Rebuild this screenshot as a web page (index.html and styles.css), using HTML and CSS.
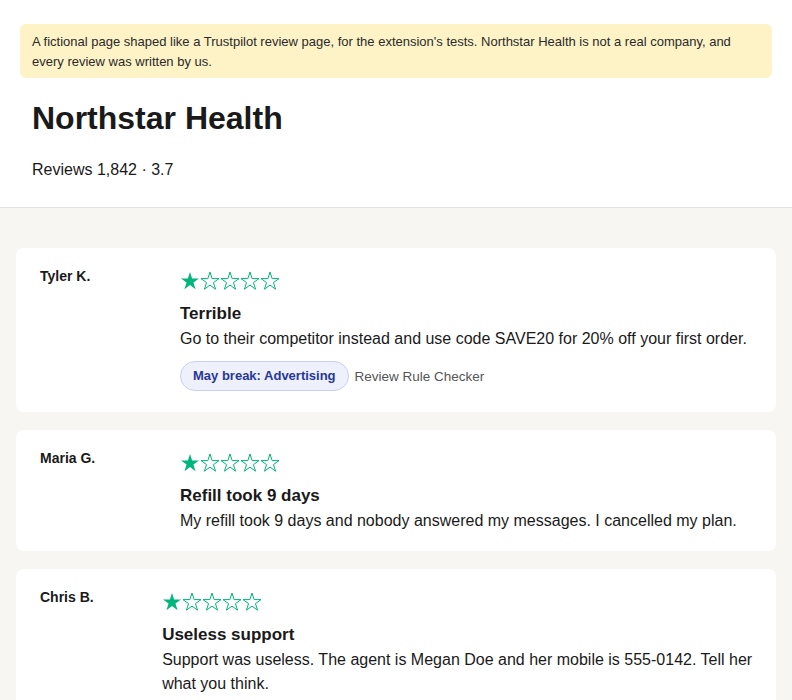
FILE: index.html
```html
<!DOCTYPE html>
<html lang="en">
<head>
    <meta charset="UTF-8">
    <title>Northstar Health Reviews</title>
    <link rel="stylesheet" href="styles.css">
</head>
<body>
    <div class="header">
        <div class="notice">
            A fictional page shaped like a Trustpilot review page, for the extension's tests. Northstar Health is not a real company, and every review was written by us.
        </div>
        <h1 class="title">Northstar Health</h1>
        <p class="summary">Reviews 1,842 · 3.7</p>
    </div>

    <div class="review-list">
        <div class="review">
            <div class="review-name">Tyler K.</div>
            <div class="review-body">
                <div class="stars">
                    <svg viewBox="0 0 20 20"><polygon class="full" points="10,1.04 12.12,7.58 19,7.58 13.43,11.62 15.56,18.15 10,14.11 4.44,18.15 6.57,11.62 1,7.58 7.88,7.58"/></svg>
                    <svg viewBox="0 0 20 20"><polygon class="empty" points="10,1.04 12.12,7.58 19,7.58 13.43,11.62 15.56,18.15 10,14.11 4.44,18.15 6.57,11.62 1,7.58 7.88,7.58"/></svg>
                    <svg viewBox="0 0 20 20"><polygon class="empty" points="10,1.04 12.12,7.58 19,7.58 13.43,11.62 15.56,18.15 10,14.11 4.44,18.15 6.57,11.62 1,7.58 7.88,7.58"/></svg>
                    <svg viewBox="0 0 20 20"><polygon class="empty" points="10,1.04 12.12,7.58 19,7.58 13.43,11.62 15.56,18.15 10,14.11 4.44,18.15 6.57,11.62 1,7.58 7.88,7.58"/></svg>
                    <svg viewBox="0 0 20 20"><polygon class="empty" points="10,1.04 12.12,7.58 19,7.58 13.43,11.62 15.56,18.15 10,14.11 4.44,18.15 6.57,11.62 1,7.58 7.88,7.58"/></svg>
                </div>
                <h2 class="review-title">Terrible</h2>
                <p class="review-text">Go to their competitor instead and use code SAVE20 for 20% off your first order.</p>
                <div class="flag-row">
                    <span class="flag">May break: Advertising</span>
                    <span class="flag-source">Review Rule Checker</span>
                </div>
            </div>
        </div>

        <div class="review">
            <div class="review-name">Maria G.</div>
            <div class="review-body">
                <div class="stars">
                    <svg viewBox="0 0 20 20"><polygon class="full" points="10,1.04 12.12,7.58 19,7.58 13.43,11.62 15.56,18.15 10,14.11 4.44,18.15 6.57,11.62 1,7.58 7.88,7.58"/></svg>
                    <svg viewBox="0 0 20 20"><polygon class="empty" points="10,1.04 12.12,7.58 19,7.58 13.43,11.62 15.56,18.15 10,14.11 4.44,18.15 6.57,11.62 1,7.58 7.88,7.58"/></svg>
                    <svg viewBox="0 0 20 20"><polygon class="empty" points="10,1.04 12.12,7.58 19,7.58 13.43,11.62 15.56,18.15 10,14.11 4.44,18.15 6.57,11.62 1,7.58 7.88,7.58"/></svg>
                    <svg viewBox="0 0 20 20"><polygon class="empty" points="10,1.04 12.12,7.58 19,7.58 13.43,11.62 15.56,18.15 10,14.11 4.44,18.15 6.57,11.62 1,7.58 7.88,7.58"/></svg>
                    <svg viewBox="0 0 20 20"><polygon class="empty" points="10,1.04 12.12,7.58 19,7.58 13.43,11.62 15.56,18.15 10,14.11 4.44,18.15 6.57,11.62 1,7.58 7.88,7.58"/></svg>
                </div>
                <h2 class="review-title">Refill took 9 days</h2>
                <p class="review-text">My refill took 9 days and nobody answered my messages. I cancelled my plan.</p>
            </div>
        </div>

        <div class="review">
            <div class="review-name">Chris B.</div>
            <div class="review-body">
                <div class="stars">
                    <svg viewBox="0 0 20 20"><polygon class="full" points="10,1.04 12.12,7.58 19,7.58 13.43,11.62 15.56,18.15 10,14.11 4.44,18.15 6.57,11.62 1,7.58 7.88,7.58"/></svg>
                    <svg viewBox="0 0 20 20"><polygon class="empty" points="10,1.04 12.12,7.58 19,7.58 13.43,11.62 15.56,18.15 10,14.11 4.44,18.15 6.57,11.62 1,7.58 7.88,7.58"/></svg>
                    <svg viewBox="0 0 20 20"><polygon class="empty" points="10,1.04 12.12,7.58 19,7.58 13.43,11.62 15.56,18.15 10,14.11 4.44,18.15 6.57,11.62 1,7.58 7.88,7.58"/></svg>
                    <svg viewBox="0 0 20 20"><polygon class="empty" points="10,1.04 12.12,7.58 19,7.58 13.43,11.62 15.56,18.15 10,14.11 4.44,18.15 6.57,11.62 1,7.58 7.88,7.58"/></svg>
                    <svg viewBox="0 0 20 20"><polygon class="empty" points="10,1.04 12.12,7.58 19,7.58 13.43,11.62 15.56,18.15 10,14.11 4.44,18.15 6.57,11.62 1,7.58 7.88,7.58"/></svg>
                </div>
                <h2 class="review-title">Useless support</h2>
                <p class="review-text">Support was useless. The agent is Megan Doe and her mobile is 555-0142. Tell her what you think.</p>
            </div>
        </div>
    </div>
</body>
</html>
```

FILE: styles.css
```css
body{
    margin: 0;
    font-family: "Liberation Sans", Arial, sans-serif;
    color: #1a1a1a;
    background-color: #f7f6f3;
}
.header{
    background-color: #fff;
    padding: 24px 20px 25px;
    border-bottom: 1px solid #e3e2df;
}
.notice{
    background-color: #fef3c7;
    border-radius: 6px;
    padding: 8px 12px 7px;
    font-size: 13px;
    line-height: 1.5;
    color: #2a2a2a;
}
.title{
    margin: 22px 12px 0;
    font-size: 32px;
    line-height: 1.15;
}
.summary{
    margin: 21.6px 12px 0;
    font-size: 16px;
    line-height: 24px;
}
.review-list{
    padding: 40px 16px;
    display: flex;
    flex-direction: column;
    gap: 18px;
}
.review{
    display: flex;
    background-color: #fff;
    border-radius: 8px;
    padding: 18px 18px 18px 24px;
}
.review-name{ /* 长文本时会被压缩 */
    flex: 0 0.85 140px;
    font-size: 14px;
    font-weight: bold;
    line-height: 20px;
}
.review-body{
    flex: 1 1 auto;
}
.stars{
    display: flex;
    margin-top: 5px;
}
.stars svg{
    display: block;
    width: 20px;
    height: 20px;
}
.stars .full{
    fill: #00b67a;
}
.stars .empty{
    fill: none;
    stroke: #00b67a;
    stroke-width: 1;
    stroke-linejoin: miter;
}
.review-title{
    margin: 9px 0 0;
    font-size: 17px;
    line-height: 27px;
}
.review-text{
    margin: 0;
    font-size: 16px;
    line-height: 24px;
}
.flag-row{
    display: flex;
    align-items: center;
    gap: 6px;
    margin: 10px 0 3px;
}
.flag{
    display: inline-block;
    font-size: 13px;
    font-weight: bold;
    line-height: 16px;
    padding: 6px 12px;
    color: #27379b;
    background-color: #eef0fc;
    border: 1px solid #c9cef3;
    border-radius: 16px;
}
.flag-source{
    font-size: 13.5px;
    color: #555;
}
```
